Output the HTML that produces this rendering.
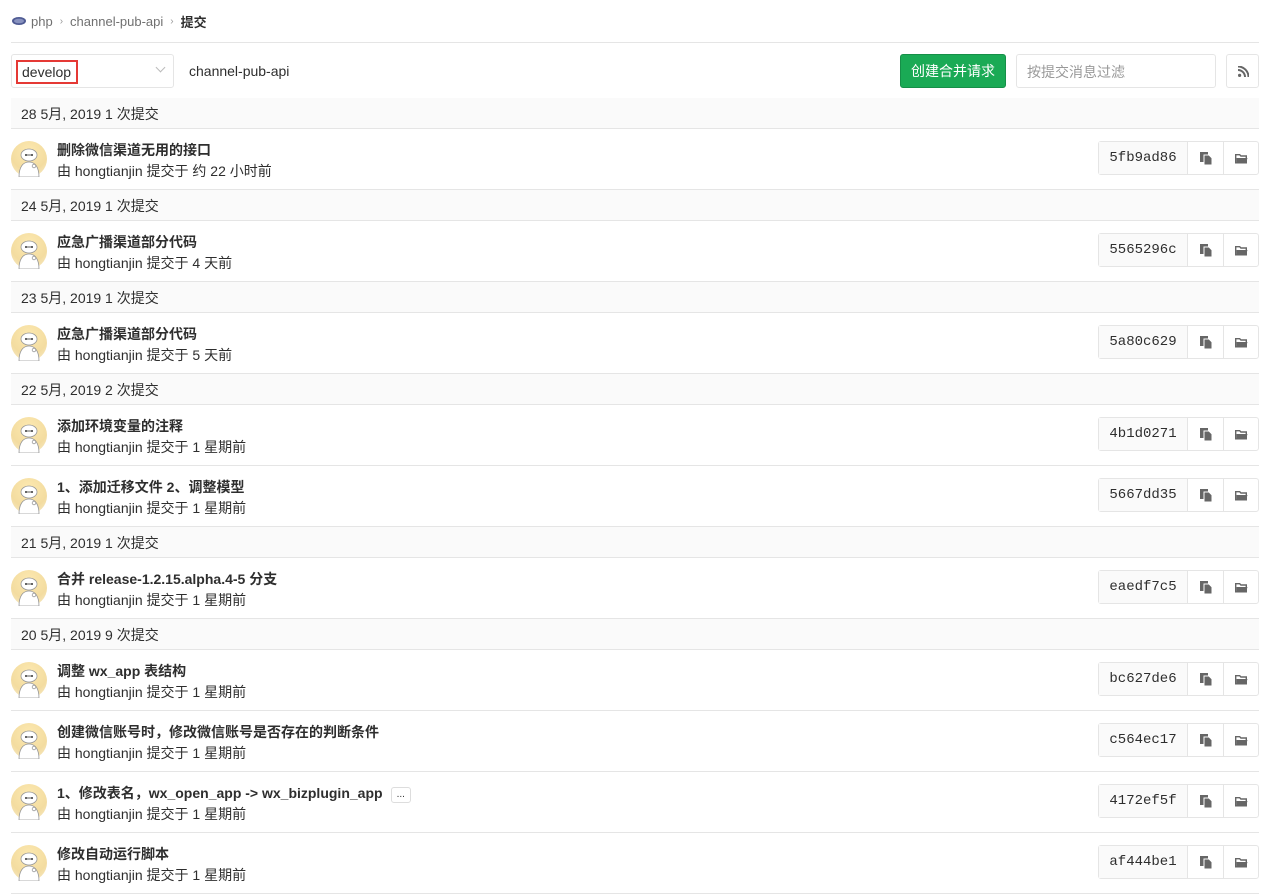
<!DOCTYPE html>
<html><head><meta charset="utf-8"><style>
*{box-sizing:border-box;margin:0;padding:0}
body{width:1271px;height:890px;overflow:hidden;background:#fff;font-family:"Liberation Sans","Noto Sans CJK SC",sans-serif;font-size:14px;color:#2e2e2e}
.wrap{position:absolute;left:11px;width:1248px;top:0}
.bc{height:43px;border-bottom:1px solid #e5e5e5;display:flex;align-items:center;font-size:13px;color:#707070;padding-left:1px}
.bc .sep{margin:0 7px;color:#999;font-size:10px}
.bc b{color:#2e2e2e}
.tb{height:55px;display:flex;align-items:center;position:relative}
.sel{position:absolute;left:0;top:11px;width:163px;height:34px;border:1px solid #e5e5e5;border-radius:3px}
.sel .v{position:absolute;left:4px;top:5px;width:62px;height:24px;border:2px solid #e53935;padding:2px 0 0 4px;font-size:14px;color:#2e2e2e}
.sel .ch{position:absolute;right:9px;top:9px;width:7px;height:7px;border-right:1.5px solid #bbb;border-bottom:1.5px solid #bbb;transform:rotate(45deg)}
.proj{position:absolute;left:178px;top:20px;font-size:14px}
.btn{position:absolute;left:889px;top:11px;width:106px;height:34px;background:#1aaa55;border:1px solid #168f48;border-radius:3px;color:#fff;font-size:14px;text-align:center;line-height:32px}
.inp{position:absolute;left:1005px;top:11px;width:200px;height:34px;border:1px solid #e5e5e5;border-radius:3px;color:#999;padding:7px 10px;font-size:14px}
.rss{position:absolute;left:1215px;top:11px;width:33px;height:34px;border:1px solid #e5e5e5;border-radius:3px}
.hd{height:31px;background:#fafafa;border-bottom:1px solid #e5e5e5;padding:6px 10px;font-size:14px;color:#2e2e2e}
.row{height:61px;border-bottom:1px solid #e5e5e5;position:relative}
.av{position:absolute;left:0;top:12px;width:36px;height:36px;border-radius:50%;background:radial-gradient(circle at 50% 30%,#fde9b0,#f3dca0 60%,#f7ecd0)}
.t1{position:absolute;left:46px;top:11px;font-weight:bold;font-size:14px;color:#2e2e2e}
.t2{position:absolute;left:46px;top:32px;font-size:14px;color:#2e2e2e}
.more{display:inline-block;margin-left:8px;border:1px solid #ddd;border-radius:3px;background:#fff;font-size:10px;padding:0 5px;height:16px;line-height:13px;vertical-align:1px;font-weight:normal}
.grp{position:absolute;right:0;top:12px;height:34px;display:flex;border:1px solid #e5e5e5;border-radius:3px}
.sha{width:89px;background:#fafafa;font-family:"Liberation Mono",monospace;font-size:14px;text-align:center;line-height:32px;border-right:1px solid #e5e5e5}
.ic{width:35px;display:flex;align-items:center;justify-content:center}
.ic+.ic{border-left:1px solid #e5e5e5}
</style></head><body>
<div class="wrap">
<div class="bc"><svg width="14" height="10" viewBox="0 0 14 10" style="margin-right:5px"><ellipse cx="7" cy="5" rx="7" ry="4" fill="#4f5b93"/><ellipse cx="7" cy="5" rx="5" ry="2.3" fill="#8892bf"/></svg>php<span class="sep">›</span>channel-pub-api<span class="sep">›</span><b>提交</b></div>
<div class="tb">
<div class="sel"><div class="v">develop</div><div class="ch"></div></div>
<div class="proj">channel-pub-api</div>
<div class="btn">创建合并请求</div>
<div class="inp">按提交消息过滤</div>
<div class="rss"><svg width="11" height="11" viewBox="0 0 11 11" style="position:absolute;left:11px;top:11px"><circle cx="1.6" cy="9.4" r="1.6" fill="#666"/><path d="M0 4a7 7 0 0 1 7 7" stroke="#666" stroke-width="2" fill="none"/><path d="M0 0.5a10.5 10.5 0 0 1 10.5 10.5" stroke="#666" stroke-width="2" fill="none"/></svg></div>
</div>
<div id="list"></div>
</div>
<script>
var robot='<svg width="36" height="36" viewBox="0 0 36 36" style="position:absolute;left:0;top:0"><ellipse cx="18" cy="14" rx="8" ry="6" fill="#fff" stroke="#999" stroke-width="0.8"/><circle cx="15" cy="14" r="1" fill="#333"/><circle cx="21" cy="14" r="1" fill="#333"/><path d="M16 14h4" stroke="#333" stroke-width="0.8"/><path d="M8 36c0-10 4-15 10-15s10 5 10 15z" fill="#fff" stroke="#999" stroke-width="0.8"/><circle cx="23" cy="25" r="1.8" fill="none" stroke="#999" stroke-width="0.8"/></svg>';
var copy='<svg width="12" height="13" viewBox="0 0 12 13"><rect x="0" y="0" width="8" height="10" fill="#666"/><path d="M4 3h5l3 3v7H4z" fill="#666" stroke="#fff" stroke-width="1"/></svg>';
var fold='<svg width="13" height="11" viewBox="0 0 13 11"><path d="M0.7 1.7h4l1.2 1.3h5.4v6.8H0.7z" fill="none" stroke="#666" stroke-width="1.4"/><path d="M1.5 5h11l-1.5 4.8H1.5z" fill="#666"/></svg>';
var d=[['28 5月, 2019 1 次提交',[['删除微信渠道无用的接口','约 22 小时前','5fb9ad86']]],
['24 5月, 2019 1 次提交',[['应急广播渠道部分代码','4 天前','5565296c']]],
['23 5月, 2019 1 次提交',[['应急广播渠道部分代码','5 天前','5a80c629']]],
['22 5月, 2019 2 次提交',[['添加环境变量的注释','1 星期前','4b1d0271'],['1、添加迁移文件 2、调整模型','1 星期前','5667dd35']]],
['21 5月, 2019 1 次提交',[['合并 release-1.2.15.alpha.4-5 分支','1 星期前','eaedf7c5']]],
['20 5月, 2019 9 次提交',[['调整 wx_app 表结构','1 星期前','bc627de6'],['创建微信账号时，修改微信账号是否存在的判断条件','1 星期前','c564ec17'],['1、修改表名，wx_open_app -&gt; wx_bizplugin_app<span class="more">...</span>','1 星期前','4172ef5f'],['修改自动运行脚本','1 星期前','af444be1']]]];
var h='';d.forEach(function(g){h+='<div class="hd">'+g[0]+'</div>';g[1].forEach(function(r){h+='<div class="row"><div class="av">'+robot+'</div><div class="t1">'+r[0]+'</div><div class="t2">由 hongtianjin 提交于 '+r[1]+'</div><div class="grp"><div class="sha">'+r[2]+'</div><div class="ic">'+copy+'</div><div class="ic">'+fold+'</div></div></div>';});});
document.getElementById('list').innerHTML=h;
</script>
</body></html>
